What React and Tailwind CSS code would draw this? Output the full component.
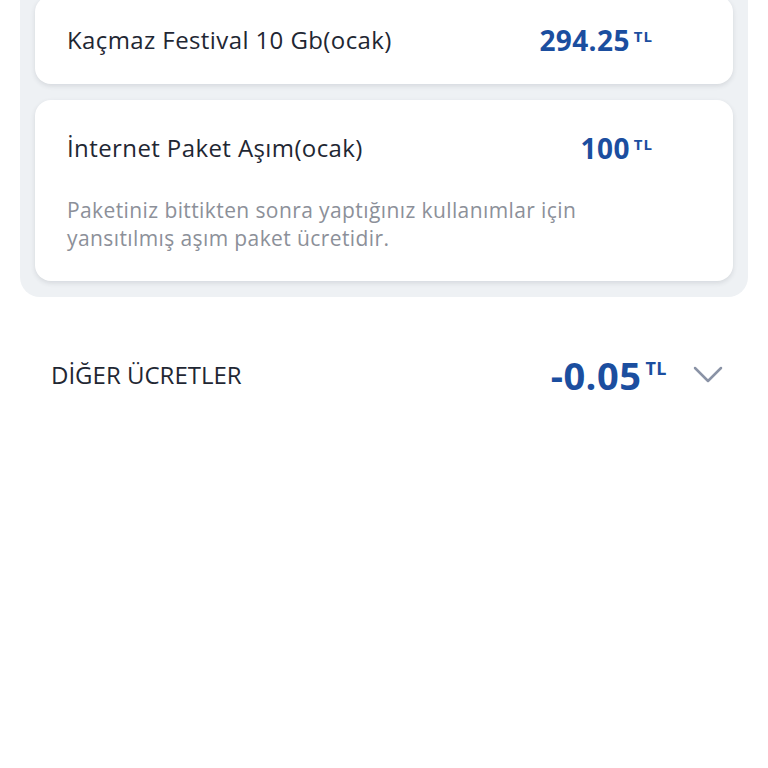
import React from "react";

const font = { fontFamily: "'Open Sans', 'Noto Sans', sans-serif" };

function Amount({ value, big }) {
  return (
    <div className="flex items-start">
      <span
        className={
          big
            ? "text-[38px] leading-[40px] font-bold text-[#1b4e9f] tracking-[0.5px]"
            : "text-[28px] leading-[32px] font-bold text-[#1b4e9f] tracking-[0.4px]"
        }
      >
        {value}
      </span>
      <span
        className={
          big
            ? "ml-[4px] mt-[3px] text-[18px] leading-[20px] font-bold text-[#1b4e9f] tracking-[0.5px]"
            : "ml-[4px] mt-[3px] text-[15px] leading-[18px] font-bold text-[#1b4e9f] tracking-[1px]"
        }
      >
        TL
      </span>
    </div>
  );
}

export default function App() {
  return (
    <div className="min-h-[768px] bg-white overflow-hidden" style={font}>
      <div className="mx-[20px] mt-[-19px] rounded-[20px] bg-[#eef1f4] px-[15px] pt-[15px] pb-[16px] flex flex-col gap-[16px]">
        <div className="h-[88px] rounded-[16px] bg-white shadow-[0_2px_5px_rgba(30,40,60,0.12)] pl-[32px] pr-[80px] flex items-center justify-between">
          <span className="text-[24px] leading-[32px] font-medium text-[#1f2733] tracking-[0.4px]">
            Kaçmaz Festival 10 Gb(ocak)
          </span>
          <Amount value="294.25" />
        </div>
        <div className="h-[181px] rounded-[16px] bg-white shadow-[0_2px_5px_rgba(30,40,60,0.12)] pl-[32px] pr-[80px] pt-[32px]">
          <div className="flex items-center justify-between">
            <span className="text-[24px] leading-[32px] font-medium text-[#1f2733] tracking-[0.4px]">
              İnternet Paket Aşım(ocak)
            </span>
            <Amount value="100" />
          </div>
          <p className="mt-[32px] text-[21px] leading-[28px] text-[#8c9099] tracking-[0.4px]">
            Paketiniz bittikten sonra yaptığınız kullanımlar için
            <br />
            yansıtılmış aşım paket ücretidir.
          </p>
        </div>
      </div>
      <div className="mt-[58px] pl-[51px] pr-[45px] flex items-center justify-between h-[40px]">
        <span className="text-[24px] font-medium text-[#1f2733]">DİĞER ÜCRETLER</span>
        <div className="flex items-center gap-[26px]">
          <Amount value="-0.05" big />
          <svg width="30" height="18" viewBox="0 0 30 18" fill="none">
            <path d="M2 2 L15 15 L28 2" stroke="#8a93a6" strokeWidth="2.5" strokeLinecap="round" strokeLinejoin="round" />
          </svg>
        </div>
      </div>
    </div>
  );
}
